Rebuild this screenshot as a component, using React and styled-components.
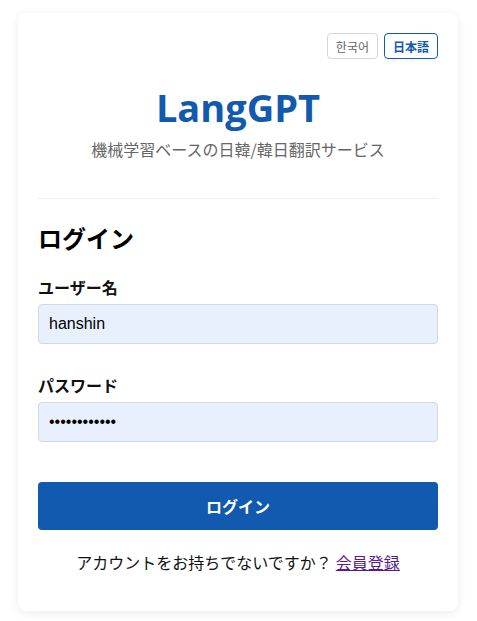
import React from "react";
import styled, { createGlobalStyle } from "styled-components";

const Global = createGlobalStyle`
  html, body { margin: 0; padding: 0; background: #ffffff; }
  body { font-family: "Noto Sans", "Noto Sans CJK JP", sans-serif; }
  * { box-sizing: border-box; }
`;

const Page = styled.div`
  padding: 13px 18px 11px 18px;
`;

const Card = styled.div`
  width: 440px;
  margin: 0;
  background: #fff;
  border-radius: 8px;
  box-shadow: 0 2px 10px rgba(0, 0, 0, 0.08);
  padding: 20px 20px 37px 20px;
  display: flex;
  flex-direction: column;
`;

const LangRow = styled.div`
  display: flex;
  justify-content: flex-end;
  gap: 6px;
`;

const LangButton = styled.button`
  height: 26px;
  padding: 0 8px;
  border-radius: 4px;
  background: #fff;
  font-family: "Noto Sans CJK JP", "Noto Sans CJK KR", sans-serif;
  font-size: 12px;
  border: 1px solid ${(p) => (p.$active ? "#1259b0" : "#d6d6d6")};
  color: ${(p) => (p.$active ? "#1259b0" : "#666")};
  font-weight: ${(p) => (p.$active ? 700 : 400)};
`;

const Header = styled.div`
  display: flex;
  flex-direction: column;
  align-items: center;
  padding: 24px 0 38px;
  border-bottom: 1px solid #eeeeee;
`;

const Title = styled.h1`
  margin: 0;
  font-family: "Open Sans", "Noto Sans", sans-serif;
  font-size: 38px;
  line-height: 48px;
  font-weight: 700;
  color: #1259b0;
`;

const Subtitle = styled.p`
  margin: 7px 0 0;
  font-family: "Noto Sans CJK JP", sans-serif;
  font-size: 16px;
  line-height: 22px;
  color: #666;
`;

const Heading = styled.h2`
  margin: 24px 0 24px;
  font-family: "Noto Sans CJK JP", sans-serif;
  font-size: 24px;
  line-height: 30px;
  font-weight: 700;
  color: #000;
`;

const Field = styled.div`
  display: flex;
  flex-direction: column;
  margin-bottom: ${(p) => p.$mb}px;
`;

const Label = styled.label`
  font-family: "Noto Sans CJK JP", sans-serif;
  font-size: 16px;
  font-weight: 700;
  line-height: 20px;
  color: #111;
  margin-bottom: 7px;
`;

const Input = styled.input`
  width: 100%;
  height: 40px;
  padding: 0 10px;
  border: 1px solid #d4d8e0;
  border-radius: 4px;
  background: #e8f0fe;
  font-family: "Liberation Sans", Arial, sans-serif;
  font-size: 16px;
  color: #000;
  outline: none;
`;

const Submit = styled.button`
  width: 100%;
  height: 48px;
  border: none;
  border-radius: 4px;
  background: #1259b0;
  color: #fff;
  font-family: "Noto Sans CJK JP", sans-serif;
  font-size: 16px;
  font-weight: 700;
`;

const Footer = styled.p`
  margin: 20px 0 0;
  text-align: center;
  font-family: "Noto Sans CJK JP", sans-serif;
  font-size: 16px;
  color: #111;
`;

const Link = styled.a`
  color: #551a8b;
  text-decoration: underline;
  margin-left: 4px;
`;

export default function App() {
  return (
    <>
      <Global />
      <Page>
        <Card>
          <LangRow>
            <LangButton>한국어</LangButton>
            <LangButton $active>日本語</LangButton>
          </LangRow>
          <Header>
            <Title>LangGPT</Title>
            <Subtitle>機械学習ベースの日韓/韓日翻訳サービス</Subtitle>
          </Header>
          <Heading>ログイン</Heading>
          <Field $mb={31}>
            <Label>ユーザー名</Label>
            <Input defaultValue="hanshin" />
          </Field>
          <Field $mb={40}>
            <Label>パスワード</Label>
            <Input type="password" defaultValue="hanshin12345" />
          </Field>
          <Submit>ログイン</Submit>
          <Footer>
            アカウントをお持ちでないですか？<Link href="#">会員登録</Link>
          </Footer>
        </Card>
      </Page>
    </>
  );
}
